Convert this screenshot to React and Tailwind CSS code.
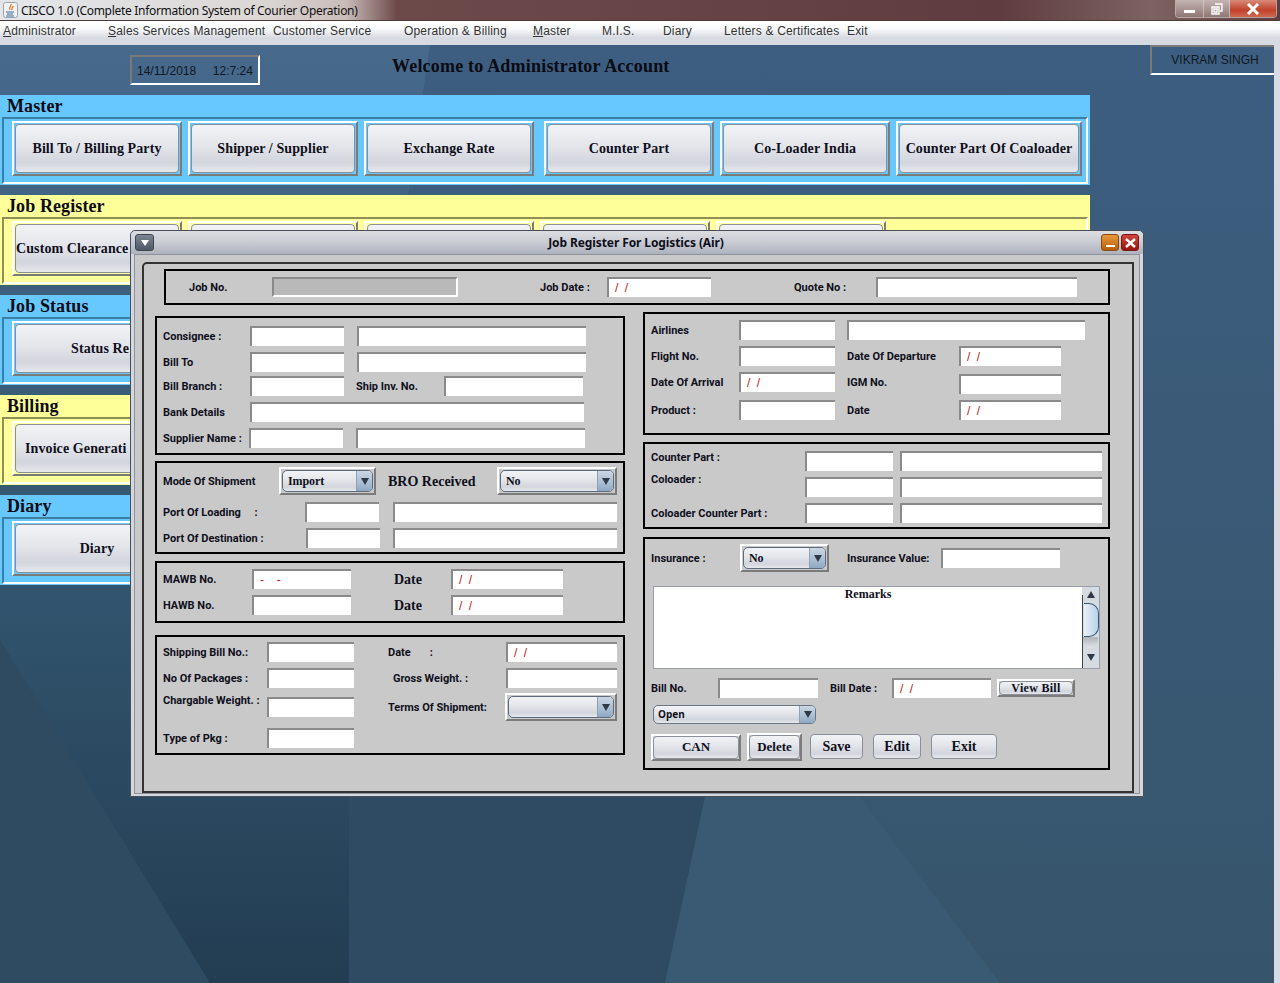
const sansFont = "font-['Noto_Sans',sans-serif]";
const btnBg = "bg-[linear-gradient(#f2f3f6,#e3e5ea_45%,#d2d5dc_80%,#e6e8ec)]";

function Arrow({ up, className = "" }) {
  return (
    <svg width="8" height="7" viewBox="0 0 8 7" className={className}>
      <polygon points={up ? "4,0 8,7 0,7" : "0,0 8,0 4,7"} fill="#2f3a46" />
    </svg>
  );
}

function Bevel({ className = "", children }) {
  return (
    <div className={"border-2 border-t-white border-l-white border-r-[#7b7b7b] border-b-[#7b7b7b] flex shrink-0 " + className}>
      {children}
    </div>
  );
}

function Btn({ className = "", children }) {
  return (
    <div className={"flex items-center justify-center rounded-[4px] border border-[#8a8f99] font-['Liberation_Serif',serif] font-bold text-[#10101c] whitespace-nowrap overflow-hidden " + btnBg + " " + className}>
      {children}
    </div>
  );
}

function Field({ className = "", mark, disabled }) {
  return (
    <div className={"h-[20px] shrink-0 border-t-2 border-l-2 border-t-[#8a8a8a] border-l-[#8a8a8a] flex items-center pl-[6px] font-['Liberation_Sans',sans-serif] text-[12px] text-[#c01818] whitespace-pre [word-spacing:3px] " + (disabled ? "bg-[#b9b9b9] border-b-2 border-r-2 border-b-white border-r-white " : "bg-white ") + className}>
      {mark}
    </div>
  );
}

function DateField({ className = "" }) {
  return <Field className={className} mark="/ /" />;
}

function Label({ className = "", children }) {
  return <div className={"shrink-0 pt-[2px] font-['Roboto',sans-serif] text-[11px] leading-[14px] font-bold text-[#10101c] whitespace-pre " + className}>{children}</div>;
}

function Combo({ className = "", text }) {
  return (
    <Bevel className={"h-[28px] p-[1px] " + className}>
      <div className={"flex-1 flex rounded-[5px] border border-[#5f6b7a] overflow-hidden " + btnBg}>
        <div className="flex-1 pl-[5px] flex items-center font-['Liberation_Serif',serif] font-bold text-[12px] tracking-[-0.1px] text-[#10101c]">{text}</div>
        <div className="w-[16px] flex items-center justify-center bg-[linear-gradient(#c9d6e4,#a9bed3_60%,#8ea8c2)] border-l border-[#8fa0b2]">
          <Arrow />
        </div>
      </div>
    </Bevel>
  );
}

function Box({ className = "", children }) {
  return <div className={"border-2 border-black pl-[6px] " + className}>{children}</div>;
}

function Row({ className = "", children }) {
  return <div className={"flex items-center h-[20px] " + className}>{children}</div>;
}

function SerifLabel({ className = "", children }) {
  return <div className={"shrink-0 font-['Liberation_Serif',serif] font-bold text-[14px] text-[#10101c] whitespace-nowrap " + className}>{children}</div>;
}

function Section({ tone, title, children }) {
  const blue = tone === "blue";
  return (
    <div className={"h-[90px] w-[1090px] px-[2px] flex flex-col " + (blue ? "bg-[#66c8ff]" : "bg-[#ffff99]")}>
      <div className="h-[22px] pl-[5px] font-['Liberation_Serif',serif] font-bold text-[18px] leading-[22px] tracking-[0.1px] text-[#0b0b14]">{title}</div>
      <div className={"h-[67px] border-2 border-r-white border-b-white pl-[8px] pt-[2px] flex " + (blue ? "border-t-[#3c7fa6] border-l-[#3c7fa6]" : "border-t-[#8f8f5c] border-l-[#8f8f5c]")}>
        {children}
      </div>
    </div>
  );
}

function BigButton({ className = "", inner = "", children }) {
  return (
    <Bevel className={"h-[55px] p-[1px] " + className}>
      <Btn className={"flex-1 text-[14px] tracking-[0.1px] " + inner}>{children}</Btn>
    </Bevel>
  );
}

function Wallpaper() {
  return (
    <svg className="absolute inset-0" width="1274" height="938" viewBox="0 45 1274 938">
      <defs>
        <linearGradient id="leftShade" x1="0" y1="45" x2="0" y2="983" gradientUnits="userSpaceOnUse">
          <stop offset="0" stopColor="#47698c" />
          <stop offset="0.55" stopColor="#335670" />
          <stop offset="1" stopColor="#233d52" />
        </linearGradient>
        <linearGradient id="baseShade" x1="0" y1="45" x2="0" y2="983" gradientUnits="userSpaceOnUse">
          <stop offset="0" stopColor="#3d5e80" />
          <stop offset="1" stopColor="#36556c" />
        </linearGradient>
      </defs>
      <rect x="0" y="45" width="1274" height="938" fill="url(#baseShade)" />
      <polygon points="349,600 705,797 665,983 349,983" fill="#2e4b63" />
      <polygon points="705,797 860,797 1000,983 665,983" fill="#3a5a73" />
      <polygon points="0,45 430,45 349,600 349,983 0,983" fill="url(#leftShade)" />
      <polygon points="0,640 210,983 0,983" fill="#2e4b62" />
    </svg>
  );
}

function Dialog() {
  return (
    <div className={"absolute left-[130px] top-[230px] w-[1014px] h-[567px] border border-[#4a4f57] rounded-t-[5px] bg-[#d3d7e0] flex flex-col " + sansFont}>
      <div className="h-[23px] shrink-0 flex items-center pl-[4px] pr-[4px] rounded-t-[5px] bg-[linear-gradient(#dcdee2,#c8cbd2_50%,#aeb2bc)] relative">
        <div className="w-[19px] h-[17px] rounded-[3px] bg-[linear-gradient(#7d8594,#4f5768)] border border-[#3f4654] flex items-center justify-center">
          <svg width="8" height="6" viewBox="0 0 8 6"><polygon points="0,0 8,0 4,6" fill="#fff" /></svg>
        </div>
        <div className="flex-1 pl-[17px] text-center text-[12px] font-bold text-[#10101c] tracking-[-0.1px]">Job Register For Logistics (Air)</div>
        <div className="w-[18px] h-[17px] rounded-[3px] bg-[linear-gradient(#e59a3a,#b85f0c)] border border-[#8a4a10] flex items-end justify-center pb-[3px] mr-[2px]">
          <div className="w-[9px] h-[2px] bg-white" />
        </div>
        <div className="w-[18px] h-[17px] rounded-[3px] bg-[linear-gradient(#d0453c,#98140f)] border border-[#7a1410] flex items-center justify-center">
          <svg width="11" height="10" viewBox="0 0 11 10"><path d="M1 1l9 8M10 1l-9 8" stroke="#fff" strokeWidth="2.4" /></svg>
        </div>
      </div>

      <div className="flex-1 mx-[3px] mb-[2px] border border-[#8e939c] bg-[#c9c9c9] pl-[7px] pt-[7px]">
        <div className="w-[992px] h-[531px] border-2 border-[#333] rounded-tl-[5px] flex flex-col">
          <div className="mt-[5px] ml-[20px] w-[946px] h-[36px] border-2 border-black pl-[23px] pt-[6px]">
            <Row>
              <Label className="w-[83px]">Job No.</Label>
              <Field className="w-[186px]" disabled />
              <Label className="ml-[82px] w-[67px]">Job Date :</Label>
              <DateField className="w-[104px]" />
              <Label className="ml-[83px] w-[82px]">Quote No :</Label>
              <Field className="w-[201px]" />
            </Row>
          </div>

          <div className="flex items-start ml-[11px] mt-[7px]">
            <div className="w-[470px] mt-[4px] flex flex-col">
              <Box className="h-[139px]">
                <Row className="mt-[8px]">
                  <Label className="w-[87px]">Consignee :</Label>
                  <Field className="w-[94px]" />
                  <Field className="ml-[13px] w-[229px]" />
                </Row>
                <Row className="mt-[6px]">
                  <Label className="w-[87px]">Bill To</Label>
                  <Field className="w-[94px]" />
                  <Field className="ml-[13px] w-[229px]" />
                </Row>
                <Row className="mt-[4px]">
                  <Label className="w-[87px]">Bill Branch :</Label>
                  <Field className="w-[94px]" />
                  <Label className="ml-[12px] w-[88px]">Ship Inv. No.</Label>
                  <Field className="w-[139px]" />
                </Row>
                <Row className="mt-[6px]">
                  <Label className="w-[87px]">Bank Details</Label>
                  <Field className="w-[334px]" />
                </Row>
                <Row className="mt-[6px]">
                  <Label className="w-[86px]">Supplier Name :</Label>
                  <Field className="w-[94px]" />
                  <Field className="ml-[13px] w-[229px]" />
                </Row>
              </Box>

              <Box className="mt-[6px] h-[93px]">
                <Row className="mt-[4px] !h-[28px]">
                  <Label className="w-[116px]">Mode Of Shipment</Label>
                  <Combo className="w-[97px]" text="Import" />
                  <SerifLabel className="ml-[12px] w-[109px]">BRO Received</SerifLabel>
                  <Combo className="w-[120px]" text="No" />
                </Row>
                <Row className="mt-[7px]">
                  <Label className="w-[142px]">{"Port Of Loading     :"}</Label>
                  <Field className="w-[74px]" />
                  <Field className="ml-[14px] w-[224px]" />
                </Row>
                <Row className="mt-[6px]">
                  <Label className="w-[143px]">Port Of Destination :</Label>
                  <Field className="w-[74px]" />
                  <Field className="ml-[13px] w-[224px]" />
                </Row>
              </Box>

              <Box className="mt-[7px] h-[62px]">
                <Row className="mt-[6px]">
                  <Label className="w-[89px]">MAWB No.</Label>
                  <Field className="w-[99px]" mark={"-  -"} />
                  <SerifLabel className="ml-[43px] w-[57px]">Date</SerifLabel>
                  <DateField className="w-[112px]" />
                </Row>
                <Row className="mt-[6px]">
                  <Label className="w-[89px]">HAWB No.</Label>
                  <Field className="w-[99px]" />
                  <SerifLabel className="ml-[43px] w-[57px]">Date</SerifLabel>
                  <DateField className="w-[112px]" />
                </Row>
              </Box>

              <Box className="mt-[12px] h-[120px]">
                <Row className="mt-[5px]">
                  <Label className="w-[104px]">Shipping Bill No.:</Label>
                  <Field className="w-[87px]" />
                  <Label className="ml-[34px] w-[118px]">{"Date       :"}</Label>
                  <DateField className="w-[111px]" />
                </Row>
                <Row className="mt-[6px]">
                  <Label className="w-[104px]">No Of Packages :</Label>
                  <Field className="w-[87px]" />
                  <Label className="ml-[39px] w-[113px]">Gross Weight. :</Label>
                  <Field className="w-[111px]" />
                </Row>
                <Row className="mt-[5px] !h-[28px]">
                  <Label className="w-[104px] self-start -mt-[1px]">Chargable Weight. :</Label>
                  <Field className="w-[87px]" />
                  <Label className="ml-[34px] w-[117px]">Terms Of Shipment:</Label>
                  <Combo className="w-[112px]" text="" />
                </Row>
                <Row className="mt-[7px]">
                  <Label className="w-[104px]">Type of Pkg :</Label>
                  <Field className="w-[87px]" />
                </Row>
              </Box>
            </div>

            <div className="ml-[18px] w-[467px] flex flex-col">
              <Box className="h-[123px]">
                <Row className="mt-[6px]">
                  <Label className="w-[88px]">Airlines</Label>
                  <Field className="w-[96px]" />
                  <Field className="ml-[12px] w-[238px]" />
                </Row>
                <Row className="mt-[6px]">
                  <Label className="w-[88px]">Flight No.</Label>
                  <Field className="w-[96px]" />
                  <Label className="ml-[12px] w-[112px]">Date Of Departure</Label>
                  <DateField className="w-[102px]" />
                </Row>
                <Row className="mt-[6px]">
                  <Label className="w-[88px]">Date Of Arrival</Label>
                  <DateField className="w-[96px]" />
                  <Label className="ml-[12px] w-[112px]">IGM No.</Label>
                  <Field className="w-[102px] mt-[4px]" />
                </Row>
                <Row className="mt-[8px]">
                  <Label className="w-[88px]">Product :</Label>
                  <Field className="w-[96px]" />
                  <Label className="ml-[12px] w-[112px]">Date</Label>
                  <DateField className="w-[102px]" />
                </Row>
              </Box>

              <Box className="mt-[7px] h-[87px]">
                <Row className="mt-[7px]">
                  <Label className="w-[154px] self-start -mt-[2px]">Counter Part :</Label>
                  <Field className="w-[88px]" />
                  <Field className="ml-[7px] w-[202px]" />
                </Row>
                <Row className="mt-[6px]">
                  <Label className="w-[154px] self-start -mt-[6px]">Coloader :</Label>
                  <Field className="w-[88px]" />
                  <Field className="ml-[7px] w-[202px]" />
                </Row>
                <Row className="mt-[6px]">
                  <Label className="w-[154px]">Coloader Counter Part :</Label>
                  <Field className="w-[88px]" />
                  <Field className="ml-[7px] w-[202px]" />
                </Row>
              </Box>

              <Box className="mt-[8px] h-[233px]">
                <Row className="mt-[5px] !h-[28px]">
                  <Label className="w-[89px]">Insurance :</Label>
                  <Combo className="w-[89px]" text="No" />
                  <Label className="ml-[18px] w-[94px]">Insurance Value:</Label>
                  <Field className="w-[119px]" />
                </Row>

                <div className="mt-[14px] ml-[2px] w-[447px] h-[83px] border border-[#9a9eaa] bg-white flex">
                  <div className="flex-1 text-center font-['Liberation_Serif',serif] font-bold text-[12px] leading-[14px] text-[#10101c]">Remarks</div>
                  <div className="w-[17px] bg-[#d6dae1] flex flex-col items-center pt-[4px] relative">
                    <Arrow up />
                    <div className="absolute left-0 top-[8px] bottom-0 w-[1px] bg-[#444]" />
                    <div className="mt-[5px] w-[15px] h-[34px] ml-[1px] rounded-r-[10px] border border-l-0 border-[#3b5a78] bg-[linear-gradient(90deg,#e8f0f8,#b9d2e8)]" />
                    <div className="w-[15px] h-[11px] bg-[linear-gradient(#b0b3b8,#e0e2e6)] rounded-b-[8px]" />
                    <Arrow className="mt-[6px]" />
                  </div>
                </div>

                <Row className="mt-[9px]">
                  <Label className="w-[67px]">Bill No.</Label>
                  <Field className="w-[100px]" />
                  <Label className="ml-[12px] w-[62px]">Bill Date :</Label>
                  <DateField className="w-[99px]" />
                  <Bevel className="ml-[6px] w-[78px] h-[18px]">
                    <Btn className="flex-1 text-[12px] tracking-[0.3px]">View Bill</Btn>
                  </Bevel>
                </Row>

                <div className={"mt-[7px] ml-[2px] w-[163px] h-[19px] flex rounded-[5px] border border-[#6b7684] overflow-hidden " + btnBg}>
                  <div className="flex-1 pl-[4px] flex items-center text-[10px] font-bold text-[#10101c]">Open</div>
                  <div className="w-[16px] flex items-center justify-center bg-[linear-gradient(#c9d6e4,#a9bed3_60%,#8ea8c2)] border-l border-[#8fa0b2]">
                    <Arrow />
                  </div>
                </div>

                <div className="mt-[9px] flex items-start">
                  <Bevel className="mt-[1px] w-[90px] h-[27px]">
                    <Btn className="flex-1 text-[13px] pb-[1px]">CAN</Btn>
                  </Bevel>
                  <Bevel className="ml-[6px] w-[55px] h-[28px]">
                    <Btn className="flex-1 text-[13px]">Delete</Btn>
                  </Bevel>
                  <Btn className="ml-[8px] mt-[1px] w-[53px] h-[25px] text-[14px]">Save</Btn>
                  <Btn className="ml-[10px] mt-[1px] w-[48px] h-[25px] text-[14px]">Edit</Btn>
                  <Btn className="ml-[10px] mt-[1px] w-[66px] h-[25px] text-[14px]">Exit</Btn>
                </div>
              </Box>
            </div>
          </div>
        </div>
      </div>
    </div>
  );
}

export default function App() {
  return (
    <div className="relative w-[1280px] h-[983px] overflow-hidden flex flex-col bg-[#d7dae0] font-['Liberation_Sans',sans-serif]">
      {/* window title */}
      <div className="h-[20px] shrink-0 flex items-center bg-[linear-gradient(90deg,#e4e6ea_0,#dcd8d6_20%,#c9bcb9_27%,#6d4a4a_31%,#5f3c3f_78%,#7d6362_90%,#5f3c3f_100%)]">
        <svg className="ml-[3px]" width="15" height="16" viewBox="0 0 15 16">
          <rect x="0.5" y="0.5" width="14" height="15" rx="2" fill="#f2f2f2" stroke="#9aa3ad" />
          <path d="M8 2c1 2-3 3-1 6M10 4c0 2-2 2-1 4" stroke="#e0701a" strokeWidth="1.2" fill="none" />
          <path d="M3 10h8M4 12h6M3 14h8" stroke="#3a6ea5" strokeWidth="1" />
        </svg>
        <div className="ml-[3px] pt-[2px] text-[12px] tracking-[-0.3px] text-[#111] font-['Noto_Sans',sans-serif] whitespace-nowrap">CISCO 1.0 (Complete Information System of Courier Operation)</div>
        <div className="ml-auto mr-[3px] flex h-[18px] -mt-[2px] rounded-b-[4px] border border-t-0 border-[#e8e0e0]/60 overflow-hidden">
          <div className="w-[28px] flex items-end justify-center pb-[4px] bg-[linear-gradient(#c4b4b2,#8f7774)] border-r border-[#e8e0e0]/50">
            <div className="w-[11px] h-[3px] bg-white" />
          </div>
          <div className="w-[26px] flex items-center justify-center bg-[linear-gradient(#c4b4b2,#8f7774)] border-r border-[#e8e0e0]/50">
            <svg width="12" height="12" viewBox="0 0 12 12"><path d="M4 1h7v7h-2M1 4h7v7H1z M3 6h3v3H3z" stroke="#fff" strokeWidth="1.4" fill="none" /></svg>
          </div>
          <div className="w-[46px] flex items-center justify-center bg-[linear-gradient(#d98a78,#c0412a_60%,#d06a50)]">
            <svg width="14" height="12" viewBox="0 0 14 12"><path d="M2 1l10 10M12 1L2 11" stroke="#fff" strokeWidth="3" /></svg>
          </div>
        </div>
      </div>
      {/* menu */}
      <div className="h-[25px] shrink-0 border-t border-t-[#4c3a3a] pb-[4px] flex items-center text-[12px] tracking-[0.18px] text-[#333] whitespace-nowrap bg-[linear-gradient(#fff,#fafbfc_30%,#d7dae0_70%)]">
        <div className="ml-[3px] w-[105px]"><span className="underline">A</span>dministrator</div>
        <div className="w-[165px]"><span className="underline">S</span>ales Services Management</div>
        <div className="w-[131px]">Customer Service</div>
        <div className="w-[129px]">Operation &amp; Billing</div>
        <div className="w-[69px]"><span className="underline">M</span>aster</div>
        <div className="w-[61px]">M.I.S.</div>
        <div className="w-[61px]">Diary</div>
        <div className="w-[123px]">Letters &amp; Certificates</div>
        <div>Exit</div>
      </div>
      {/* desktop */}
      <div className="relative flex-1 mr-[6px]">
        <Wallpaper />
        <div className="relative">
          <div className="h-[50px] flex items-start">
            <div className="ml-[130px] mt-[10px] w-[130px] h-[30px] border-2 border-t-[#7a7a7a] border-l-[#7a7a7a] border-r-white border-b-white flex items-center pl-[5px] pt-[1px] text-[12px] text-[#0f1722] whitespace-pre">
              {"14/11/2018     12:7:24"}
            </div>
            <div className="ml-[132px] mt-[10px] font-['Liberation_Serif',serif] font-bold text-[18px] leading-[22px] text-[#0b0b14] tracking-[0.2px]">Welcome to Administrator Account</div>
            <div className="ml-auto w-[124px] h-[30px] border-t-2 border-l-2 border-b-2 border-t-[#7a7a7a] border-l-[#7a7a7a] border-b-white flex items-center justify-center pl-[4px] text-[12px] text-[#0f1722]">VIKRAM SINGH</div>
          </div>

          <div className="flex flex-col gap-[10px]">
            <Section tone="blue" title="Master">
              <BigButton className="w-[170px]">Bill To / Billing Party</BigButton>
              <BigButton className="ml-[6px] w-[170px]">Shipper / Supplier</BigButton>
              <BigButton className="ml-[6px] w-[170px]">Exchange Rate</BigButton>
              <BigButton className="ml-[10px] w-[170px]">Counter Part</BigButton>
              <BigButton className="ml-[6px] w-[170px]">Co-Loader India</BigButton>
              <BigButton className="ml-[6px] w-[186px]">Counter Part Of Coaloader</BigButton>
            </Section>
            <Section tone="yellow" title="Job Register">
              <BigButton className="w-[170px]" inner="!justify-start pl-[0px]">Custom Clearance</BigButton>
              <BigButton className="ml-[6px] w-[170px]" />
              <BigButton className="ml-[6px] w-[170px]" />
              <BigButton className="ml-[6px] w-[170px]" />
              <BigButton className="ml-[6px] w-[170px]" />
            </Section>
            <Section tone="blue" title="Job Status">
              <BigButton className="w-[170px]" inner="!justify-start pl-[55px]">Status Re</BigButton>
            </Section>
            <Section tone="yellow" title="Billing">
              <BigButton className="w-[170px]" inner="!justify-start pl-[9px]">Invoice Generati</BigButton>
            </Section>
            <Section tone="blue" title="Diary">
              <BigButton className="w-[170px]">Diary</BigButton>
            </Section>
          </div>
        </div>
      </div>
      <Dialog />
    </div>
  );
}
